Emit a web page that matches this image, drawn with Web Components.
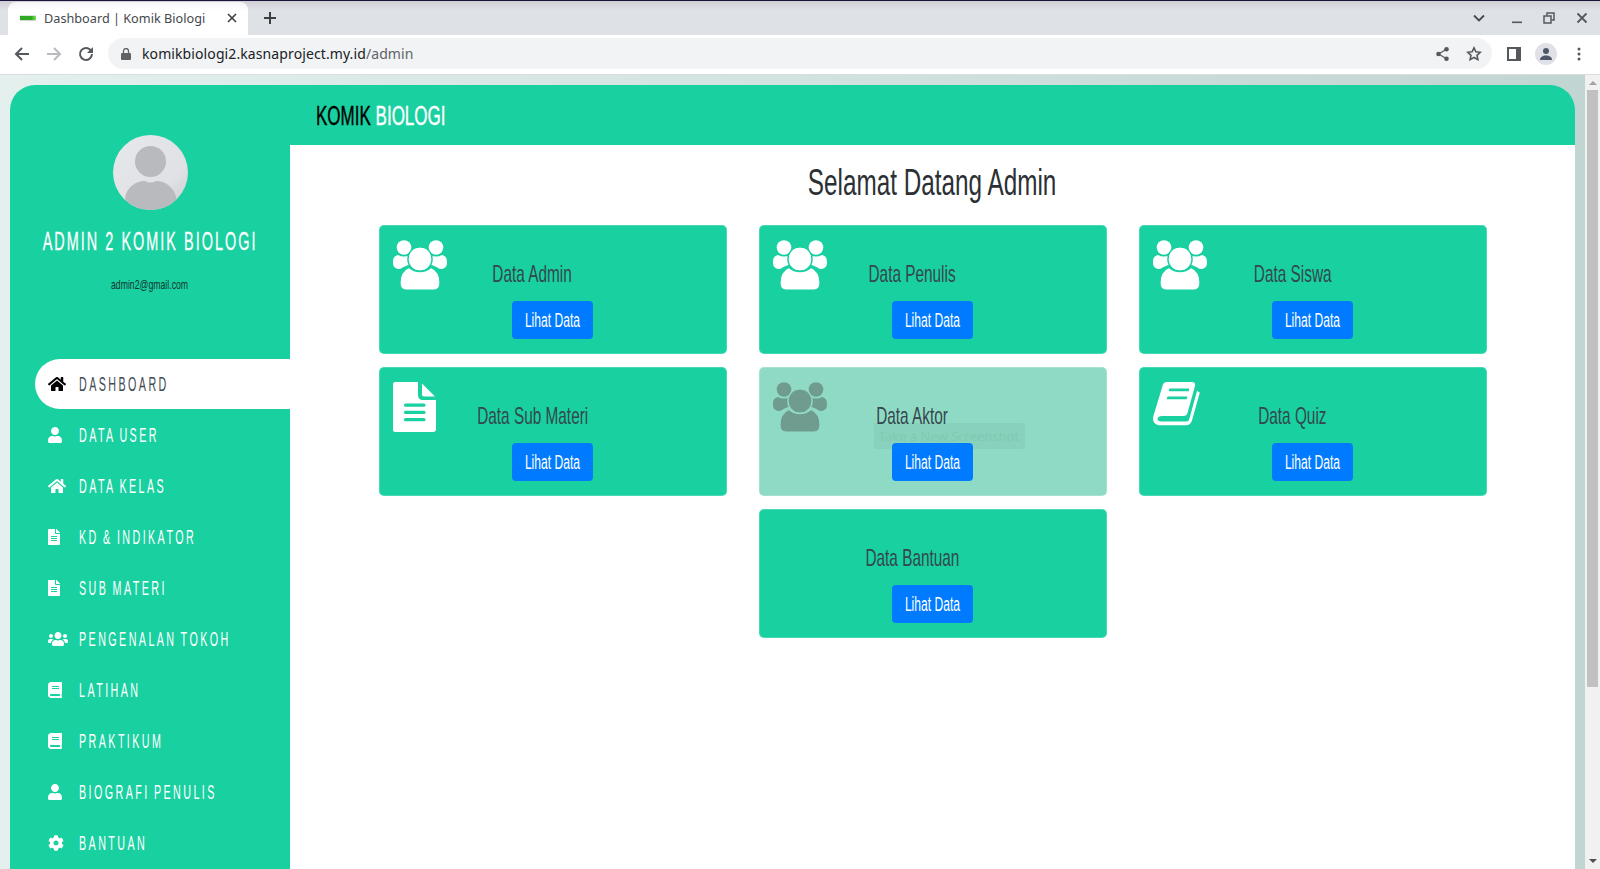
<!DOCTYPE html>
<html lang="id">
<head>
<meta charset="utf-8">
<title>Dashboard | Komik Biologi</title>
<style>
  html, body { margin: 0; height: 100%; overflow: hidden; }
  body { font-family: "Liberation Sans", sans-serif; }
</style>
</head>
<body>
<admin-window></admin-window>

<script>
// Font Awesome style icon paths
const ICONS = {
    home: ['0 0 576 512', 'M280.37 148.26L96 300.11V464a16 16 0 0 0 16 16l112.06-.29a16 16 0 0 0 15.92-16V368a16 16 0 0 1 16-16h64a16 16 0 0 1 16 16v95.64a16 16 0 0 0 16 16.05L464 480a16 16 0 0 0 16-16V300L295.67 148.26a12.19 12.19 0 0 0-15.3 0zM571.6 251.47L488 182.56V44.05a12 12 0 0 0-12-12h-56a12 12 0 0 0-12 12v72.61L318.47 43a48 48 0 0 0-61 0L4.34 251.47a12 12 0 0 0-1.6 16.9l25.5 31A12 12 0 0 0 45.15 301l235.22-193.74a12.19 12.19 0 0 1 15.3 0L530.9 301a12 12 0 0 0 16.9-1.6l25.5-31a12 12 0 0 0-1.7-16.93z'],
    user: ['0 0 448 512', 'M224 256c70.7 0 128-57.3 128-128S294.7 0 224 0 96 57.3 96 128s57.3 128 128 128zm89.6 32h-16.7c-22.2 10.2-46.9 16-72.9 16s-50.6-5.8-72.9-16h-16.7C60.2 288 0 348.2 0 422.4V464c0 26.5 21.5 48 48 48h352c26.5 0 48-21.5 48-48v-41.6c0-74.2-60.2-134.4-134.4-134.4z'],
    file: ['0 0 384 512', 'M224 136V0H24C10.7 0 0 10.7 0 24v464c0 13.3 10.7 24 24 24h336c13.3 0 24-10.7 24-24V160H248c-13.2 0-24-10.8-24-24zm64 236c0 6.6-5.4 12-12 12H108c-6.6 0-12-5.4-12-12v-8c0-6.6 5.4-12 12-12h168c6.6 0 12 5.4 12 12v8zm0-64c0 6.6-5.4 12-12 12H108c-6.6 0-12-5.4-12-12v-8c0-6.6 5.4-12 12-12h168c6.6 0 12 5.4 12 12v8zm0-72v8c0 6.6-5.4 12-12 12H108c-6.6 0-12-5.4-12-12v-8c0-6.6 5.4-12 12-12h168c6.6 0 12 5.4 12 12zm96-114.1v6.1H256V0h6.1c6.4 0 12.5 2.5 17 7l97.9 98c4.5 4.5 7 10.6 7 16.9z'],
    users: ['0 0 640 512', 'M96 224c35.3 0 64-28.7 64-64s-28.7-64-64-64-64 28.7-64 64 28.7 64 64 64zm448 0c35.3 0 64-28.7 64-64s-28.7-64-64-64-64 28.7-64 64 28.7 64 64 64zm32 32h-64c-17.6 0-33.5 7.1-45.1 18.6 40.3 22.1 68.9 62 75.1 109.4h66c17.7 0 32-14.3 32-32v-32c0-35.3-28.7-64-64-64zm-256 0c61.9 0 112-50.1 112-112S381.9 32 320 32 208 82.1 208 144s50.1 112 112 112zm76.8 32h-8.3c-20.8 10-43.9 16-68.5 16s-47.6-6-68.5-16h-8.3C179.6 288 128 339.6 128 403.2V432c0 26.5 21.5 48 48 48h288c26.5 0 48-21.5 48-48v-28.8c0-63.6-51.6-115.2-115.2-115.2zm-223.7-13.4C161.5 263.1 145.6 256 128 256H64c-35.3 0-64 28.7-64 64v32c0 17.7 14.3 32 32 32h65.9c6.3-47.4 34.9-87.3 75.2-109.4z'],
    book: ['0 0 448 512', 'M448 360V24c0-13.3-10.7-24-24-24H96C43 0 0 43 0 96v320c0 53 43 96 96 96h328c13.3 0 24-10.7 24-24v-16c0-7.5-3.5-14.3-8.9-18.7-4.2-15.4-4.2-59.3 0-74.7 5.4-4.3 8.9-11.1 8.9-18.6zM128 134c0-3.3 2.7-6 6-6h212c3.3 0 6 2.7 6 6v20c0 3.3-2.7 6-6 6H134c-3.3 0-6-2.7-6-6v-20zm0 64c0-3.3 2.7-6 6-6h212c3.3 0 6 2.7 6 6v20c0 3.3-2.7 6-6 6H134c-3.3 0-6-2.7-6-6v-20zm253.4 250H96c-17.7 0-32-14.3-32-32 0-17.6 14.4-32 32-32h285.4c-1.9 17.1-1.9 46.9 0 64z'],
    cog: ['0 0 512 512', 'M487.4 315.7l-42.6-24.6c4.3-23.2 4.3-47 0-70.2l42.6-24.6c4.9-2.8 7.1-8.6 5.5-14-11.1-35.6-30-67.8-54.7-94.6-3.8-4.1-10-5.1-14.8-2.3L380.8 110c-17.9-15.4-38.5-27.3-60.8-35.1V25.8c0-5.6-3.9-10.5-9.4-11.7-36.7-8.2-74.3-7.8-109.2 0-5.5 1.2-9.4 6.1-9.4 11.7V75c-22.2 7.9-42.8 19.8-60.8 35.1L88.7 85.5c-4.9-2.8-11-1.9-14.8 2.3-24.7 26.7-43.6 58.9-54.7 94.6-1.7 5.4.6 11.2 5.5 14L67.3 221c-4.3 23.2-4.3 47 0 70.2l-42.6 24.6c-4.9 2.8-7.1 8.6-5.5 14 11.1 35.6 30 67.8 54.7 94.6 3.8 4.1 10 5.1 14.8 2.3l42.6-24.6c17.9 15.4 38.5 27.3 60.8 35.1v49.2c0 5.6 3.9 10.5 9.4 11.7 36.7 8.2 74.3 7.8 109.2 0 5.5-1.2 9.4-6.1 9.4-11.7v-49.2c22.2-7.9 42.8-19.8 60.8-35.1l42.6 24.6c4.9 2.8 11 1.9 14.8-2.3 24.7-26.7 43.6-58.9 54.7-94.6 1.5-5.5-.7-11.3-5.6-14.1zM256 336c-44.1 0-80-35.9-80-80s35.9-80 80-80 80 35.9 80 80-35.9 80-80 80z']
};

// Big card icons, --ring is the colour that cuts through the white shape
const CARD_ICONS = {
    people: `<svg width="54" height="50" viewBox="0 0 54 50" fill="currentColor">
        <circle cx="11" cy="7.5" r="7.3"/><circle cx="43" cy="7.5" r="7.3"/>
        <path d="M5 15 C9 17 13 17 17 15 L20 24 C13 25 9 28 7 29 C3 29 0 27 0 23 C0 18 1 16 5 15Z"/>
        <path d="M49 15 C45 17 41 17 37 15 L34 24 C41 25 45 28 47 29 C51 29 54 27 54 23 C54 18 53 16 49 15Z"/>
        <circle cx="27" cy="19" r="12" stroke="var(--ring)" stroke-width="1.6"/>
        <path d="M16 27.500 C22 33 32 33 38 27.500 C44 30 47 36 47 43 C47 47.5 44.5 50 41 50 H13 C9.5 50 7 47.5 7 43 C7 36 10 30 16 27.500Z" stroke="var(--ring)" stroke-width="1.200"/>
        <circle cx="27" cy="19" r="11.200"/>
    </svg>`,
    doc: `<svg width="43" height="50" viewBox="0 0 43 50" fill="currentColor">
        <path d="M2 0 H25 V13 C25 16 27 18 30 18 H43 V47 C43 49 42 50 40 50 H2 C1 50 0 49 0 48 V2 C0 1 1 0 2 0Z"/>
        <path d="M29 1.500 L42 14.500 H31 C30 14.500 29 13.500 29 12.500Z"/>
        <g fill="var(--ring)"><rect x="11" y="21.500" width="21.500" height="3.200" rx="1.500"/><rect x="11" y="28.800" width="21.500" height="3.200" rx="1.500"/><rect x="11" y="36" width="21.500" height="3.200" rx="1.500"/></g>
    </svg>`,
    quiz: `<svg width="47" height="44" viewBox="0 0 47 44" fill="currentColor">
        <path d="M14 0 H39 C41.500 0 42.500 1.500 42 4 L34.500 31 C34 33 32.500 34 30.500 34 H9 C6 34 4.500 35.500 4.500 37 C4.500 38.500 6 39.500 8 39.500 H33 C35 39.500 35.800 38.700 36.300 37 L44 9 L46.800 10.500 L39 38.500 C38 41.500 36 43.300 33 43.300 H7.500 C3 43.300 0 40.500 0 36.500 C0 35 .5 33.500 1 32 L9.500 4 C10 1.500 11.500 0 14 0Z"/>
        <g fill="var(--ring)"><rect x="15" y="6.500" width="20" height="2.800" rx=".5" transform="skewX(-14) translate(3 0)"/><rect x="13" y="14.500" width="20" height="2.800" rx=".5" transform="skewX(-14) translate(5 0)"/></g>
    </svg>`
};

class NarrowText extends HTMLElement {
    constructor() {
        super();
        const shadow = this.attachShadow({ mode: 'open' });
        shadow.innerHTML = `
            <style>
                :host {
                    display: inline-block;
                    flex: none;
                    white-space: nowrap;
                    transform: scaleX(var(--squeeze, .64));
                    transform-origin: var(--squeeze-from, center);
                    font-family: "Liberation Sans", sans-serif;
                }
            </style>
            <slot></slot>
        `;
    }
}
customElements.define('narrow-text', NarrowText);

class FaIcon extends HTMLElement {
    constructor() {
        super();
        const shadow = this.attachShadow({ mode: 'open' });
        const [box, d] = ICONS[this.getAttribute('name')];
        const width = box.split(' ')[2] / 512 * 16;
        shadow.innerHTML = `
            <style>:host { display: inline-flex; } svg { display: block; }</style>
            <svg width="${width}" height="16" viewBox="${box}" fill="currentColor"><path d="${d}"/></svg>
        `;
    }
}
customElements.define('fa-icon', FaIcon);

// Tab strip of the browser
class BrowserTabs extends HTMLElement {
    constructor() {
        super();
        const shadow = this.attachShadow({ mode: 'open' });
        shadow.innerHTML = `
            <style>
                :host {
                    display: flex;
                    height: 35px;
                    box-sizing: border-box;
                    padding: 1px 0 0 8px;
                    align-items: stretch;
                    color: #45484d;
                    font: 12.7px "Noto Sans", "Open Sans", sans-serif;
                    background: linear-gradient(#cfd0d6 0, #dee1e6 9px);
                    border-top: 1px solid #1b1338;
                }
                .tab {
                    width: 240px;
                    box-sizing: border-box;
                    display: flex;
                    align-items: center;
                    padding: 0 11px 2px 12px;
                    background: linear-gradient(#f4f4f6, #fff 8px);
                    border-radius: 8px 8px 0 0;
                }
                .fav { width: 16px; height: 4px; margin-right: 8px; background: linear-gradient(90deg, #2fa822 70%, #7be05c); border-top: 1px solid #d3eed8; border-bottom: 1px solid #d0d4d0; }
                .name { flex: 1; }
                .x { display: block; }
                .plus { display: block; margin: 9px 0 0 15px; }
                .right { margin-left: auto; display: flex; align-items: center; padding: 0 12px 2px 0; gap: 19px; }
            </style>
            <div class="tab">
                <span class="fav"></span>
                <span class="name">Dashboard | Komik Biologi</span>
                <svg class="x" width="10" height="10" viewBox="0 0 10 10" stroke="#3c4043" stroke-width="1.6" fill="none"><path d="M1 1l8 8M9 1l-8 8"/></svg>
            </div>
            <svg class="plus" width="14" height="14" viewBox="0 0 14 14" stroke="#3c4043" stroke-width="2" fill="none"><path d="M7 1v12M1 7h12"/></svg>
            <div class="right">
                <svg width="12" height="8" viewBox="0 0 12 8" stroke="#45484d" stroke-width="1.800" fill="none"><path d="M1 1.500l5 5 5-5"/></svg>
                <svg width="12" height="12" viewBox="0 0 12 12" fill="#55585d" style="margin-left:7px"><rect x="1" y="9.500" width="10" height="1.600"/></svg>
                <svg style="margin-left:1px" width="12" height="12" viewBox="0 0 12 12" stroke="#55585d" stroke-width="1.500" fill="none"><rect x="1" y="4" width="7" height="7"/><path d="M4 3.500V1h7v7H8.500"/></svg>
                <svg style="margin-left:2px" width="12" height="12" viewBox="0 0 12 12" stroke="#55585d" stroke-width="1.800" fill="none"><path d="M1.500 1.500l9 9M10.500 1.500l-9 9"/></svg>
            </div>
        `;
    }
}
customElements.define('browser-tabs', BrowserTabs);

// Address bar of the browser
class BrowserToolbar extends HTMLElement {
    constructor() {
        super();
        const shadow = this.attachShadow({ mode: 'open' });
        shadow.innerHTML = `
            <style>
                :host {
                    display: flex;
                    align-items: center;
                    height: 40px;
                    box-sizing: border-box;
                    background: #fff;
                    border-bottom: 1px solid #dadce0;
                    padding: 0 19px 2px 14px;
                    font: 14px "Noto Sans", "Open Sans", sans-serif;
                }
                .nav { display: flex; gap: 16px; margin-right: 14px; }
                svg { display: block; }
                .omni {
                    flex: 1;
                    height: 31px;
                    display: flex;
                    align-items: center;
                    background: #f1f3f4;
                    border-radius: 16px;
                    padding: 0 10px 0 13px;
                    color: #202124;
                }
                .lock { margin-right: 11px; }
                .host { flex: 1; letter-spacing: .1px; }
                .path { color: #5f6368; }
                .omni-end { display: flex; gap: 17px; align-items: center; }
                .tools { display: flex; gap: 14px; align-items: center; margin-left: 15px; }
                .who { width: 22px; height: 22px; border-radius: 50%; background: #dfe1e6; display: flex; align-items: center; justify-content: center; }
            </style>
            <div class="nav">
                <svg width="16" height="16" viewBox="0 0 16 16" stroke="#55585d" stroke-width="2" fill="none"><path d="M15 8H2M8 2L2 8l6 6"/></svg>
                <svg width="16" height="16" viewBox="0 0 16 16" stroke="#b9bbbe" stroke-width="2" fill="none"><path d="M1 8h13M8 2l6 6-6 6"/></svg>
                <svg width="16" height="16" viewBox="0 0 16 16" fill="none"><path d="M13.200 5A6 6 0 1 0 14 8" stroke="#55585d" stroke-width="2"/><path d="M15 1v6H9z" fill="#55585d"/></svg>
            </div>
            <div class="omni">
                <svg class="lock" width="10" height="12" viewBox="0 0 10 12" fill="#5f6368"><path d="M1 5h8a1 1 0 0 1 1 1v5a1 1 0 0 1-1 1H1a1 1 0 0 1-1-1V6a1 1 0 0 1 1-1z"/><path d="M2.500 5V3a2.500 2.500 0 0 1 5 0v2" fill="none" stroke="#5f6368" stroke-width="1.300"/></svg>
                <span class="host">komikbiologi2.kasnaproject.my.id<span class="path">/admin</span></span>
                <div class="omni-end">
                    <svg width="13" height="14" viewBox="0 0 13 14" fill="#55585d"><circle cx="2.500" cy="7" r="2.300"/><circle cx="10.500" cy="2.300" r="2.300"/><circle cx="10.500" cy="11.700" r="2.300"/><path d="M2.500 7l8-4.700M2.500 7l8 4.700" stroke="#55585d" stroke-width="1.200"/></svg>
                    <svg width="16" height="15" viewBox="0 0 16 15" fill="none" stroke="#55585d" stroke-width="1.600"><path d="M8 1.800l1.900 4 4.300.5-3.200 3 .9 4.300L8 11.500l-3.900 2.100.9-4.300-3.200-3 4.300-.5z"/></svg>
                </div>
            </div>
            <div class="tools">
                <svg width="14" height="14" viewBox="0 0 14 14"><rect width="14" height="14" fill="#55585d"/><rect x="2" y="2" width="7" height="10" fill="#fff"/></svg>
                <div class="who"><svg width="12" height="12" viewBox="0 0 12 12" fill="#4f586b"><circle cx="6" cy="3" r="3"/><path d="M0 12c0-3 2.500-4.600 6-4.600S12 9 12 12z"/></svg></div>
                <svg style="margin-left:6px" width="4" height="14" viewBox="0 0 4 14" fill="#55585d"><circle cx="2" cy="2" r="1.500"/><circle cx="2" cy="7" r="1.500"/><circle cx="2" cy="12" r="1.500"/></svg>
            </div>
        `;
    }
}
customElements.define('browser-toolbar', BrowserToolbar);

class ScrollRail extends HTMLElement {
    constructor() {
        super();
        const shadow = this.attachShadow({ mode: 'open' });
        shadow.innerHTML = `
            <style>
                :host { display: flex; flex-direction: column; flex: none; width: 15px; background: #f1f1f1; align-items: center; }
                .up, .down { flex: none; width: 0; height: 0; border-left: 4px solid transparent; border-right: 4px solid transparent; }
                .up { border-bottom: 4px solid #a3a3a3; margin: 6px 0 5px; }
                .thumb { width: 11px; height: 597px; background: #c1c1c1; }
                .down { border-top: 4px solid #505050; margin-top: auto; margin-bottom: 6px; }
            </style>
            <div class="up"></div><div class="thumb"></div><div class="down"></div>
        `;
    }
}
customElements.define('scroll-rail', ScrollRail);

// One row in the sidebar menu
class NavItem extends HTMLElement {
    constructor() {
        super();
        const shadow = this.attachShadow({ mode: 'open' });
        shadow.innerHTML = `
            <style>
                :host {
                    display: flex;
                    align-items: center;
                    height: 50px;
                    margin: 0 0 1px 25px;
                    padding-left: 13px;
                    color: #fff;
                    border-radius: 25px 0 0 25px;
                    --squeeze: .55;
                    --squeeze-from: left;
                }
                :host([active]) { background: #fff; color: #3f4a52; }
                :host([active]) .icon { color: #000; }
                .icon { flex: none; width: 30.5px; display: flex; }
                narrow-text { font-size: 19.5px; letter-spacing: 4.4px; word-spacing: -2px; }
            </style>
            <span class="icon"><fa-icon name="${this.getAttribute('icon')}"></fa-icon></span>
            <narrow-text><slot></slot></narrow-text>
        `;
    }
}
customElements.define('nav-item', NavItem);

class SideBar extends HTMLElement {
    constructor() {
        super();
        const shadow = this.attachShadow({ mode: 'open' });
        shadow.innerHTML = `
            <style>
                :host {
                    display: flex;
                    flex-direction: column;
                    flex: none;
                    width: 280px;
                    box-sizing: border-box;
                    padding-top: 50px;
                }
                .avatar { display: block; margin: 0 auto; }
                .name, .mail { display: flex; justify-content: center; }
                .name { margin-top: 16px; height: 30px; line-height: 30px; color: #fff; font-size: 25px; letter-spacing: 3.5px; -webkit-text-stroke: .3px #fff; --squeeze: .577; }
                .mail { margin-top: 21px; height: 16px; line-height: 16px; color: #12362d; font-size: 13px; --squeeze: .67; }
                nav { margin-top: 66px; display: block; }
            </style>
            <svg class="avatar" width="75" height="75" viewBox="0 0 75 75">
                <defs>
                    <linearGradient id="bg" x1="0" y1="0" x2="1" y2="1"><stop offset="0" stop-color="#e6e8eb"/><stop offset=".7" stop-color="#dfe1e4"/><stop offset="1" stop-color="#c9cbcf"/></linearGradient>
                    <clipPath id="round"><circle cx="37.5" cy="37.5" r="37.500"/></clipPath>
                </defs>
                <circle cx="37.5" cy="37.5" r="37.500" fill="url(#bg)"/>
                <g clip-path="url(#round)" fill="#b8babd">
                    <circle cx="37.500" cy="26.500" r="15.500"/>
                    <path d="M12 64 C13 53 22 46 32 46 C36 48 39 48 43 46 C53 46 62 53 63.500 64 L50 80 H25Z"/>
                </g>
            </svg>
            <div class="name"><narrow-text>ADMIN 2 KOMIK BIOLOGI</narrow-text></div>
            <div class="mail"><narrow-text>admin2@gmail.com</narrow-text></div>
            <nav><slot></slot></nav>
        `;
    }
}
customElements.define('side-bar', SideBar);

// Card with a title and the "Lihat Data" button
class DataCard extends HTMLElement {
    constructor() {
        super();
        const shadow = this.attachShadow({ mode: 'open' });
        const icon = CARD_ICONS[this.getAttribute('icon')] || '';
        shadow.innerHTML = `
            <style>
                :host {
                    display: block;
                    position: relative;
                    box-sizing: border-box;
                    height: 129px;
                    padding: 14px;
                    background: var(--card-bg, #19d0a1);
                    --ring: var(--card-bg, #19d0a1);
                    border: 1px solid rgba(255, 255, 255, .2);
                    border-radius: 5px;
                    color: var(--icon-color, #fff);
                }
                :host([faded]) { --card-bg: #8fdac4; --icon-color: #6f9c8e; }
                .top { display: grid; height: 61px; }
                .icon, .title { grid-area: 1 / 1; }
                .icon { justify-self: start; align-self: start; margin-left: -1px; }
                .icon svg { display: block; }
                .title { justify-self: center; align-self: end; position: relative; left: -20px; margin-bottom: 12px; line-height: 30px; font-size: 24px; color: #34484c; --squeeze: .64; }
                .go { display: flex; justify-content: center; position: relative; }
                .btn { width: 81px; height: 38px; display: flex; align-items: center; justify-content: center; background: #007bff; border-radius: 4px; color: #fff; font-size: 19.5px; --squeeze: .62; }
                .hint { display: none; position: absolute; left: 114px; top: 55px; width: 151px; height: 26px; background: rgba(70, 110, 100, .08); border-radius: 2px; color: #80c9b2; font: 13px/26px "Noto Sans", "Open Sans", sans-serif; text-align: center; white-space: nowrap; }
                :host([faded]) .hint { display: block; }
            </style>
            <div class="hint">Take a New Screenshot</div>
            <div class="top">
                <div class="icon">${icon}</div>
                <narrow-text class="title"><slot></slot></narrow-text>
            </div>
            <div class="go"><div class="btn"><narrow-text>Lihat Data</narrow-text></div></div>
        `;
    }
}
customElements.define('data-card', DataCard);

// Main area: heading and the grid of cards
class MainPanel extends HTMLElement {
    constructor() {
        super();
        const shadow = this.attachShadow({ mode: 'open' });
        shadow.innerHTML = `
            <style>
                :host { display: flex; flex-direction: column; flex: 1; min-width: 0; }
                .head { flex: none; height: 60px; display: flex; align-items: center; padding: 2px 0 0 26px; box-sizing: border-box; font-size: 27px; --squeeze: .63; --squeeze-from: left; }
                .head b { font-weight: normal; color: #000; -webkit-text-stroke: .4px #000; }
                .head i { font-style: normal; color: #fff; -webkit-text-stroke: .4px #fff; }
                .body { flex: 1; background: #fff; }
                h1 { margin: 0; height: 80px; box-sizing: border-box; padding-top: 15px; line-height: 46px; text-align: center; font-weight: normal; font-size: 36px; color: #2b3035; --squeeze: .675; }
                .grid { display: grid; grid-template-columns: repeat(3, 348px); gap: 13px 32px; justify-content: center; }
            </style>
            <div class="head"><narrow-text><b>KOMIK</b> <i>BIOLOGI</i></narrow-text></div>
            <div class="body">
                <h1><narrow-text>Selamat Datang Admin</narrow-text></h1>
                <div class="grid"><slot></slot></div>
            </div>
        `;
    }
}
customElements.define('main-panel', MainPanel);

// Whole screenshot: browser frame, then the page
class AdminWindow extends HTMLElement {
    constructor() {
        super();
        const shadow = this.attachShadow({ mode: 'open' });
        shadow.innerHTML = `
            <style>
                :host { display: flex; flex-direction: column; height: 869px; overflow: hidden; }
                .view { flex: 1; display: flex; min-height: 0; }
                .page { flex: 1; min-width: 0; box-sizing: border-box; padding: 10px 10px 0; background: linear-gradient(90deg, #e3f0ee, #c1d5d2); }
                .app { display: flex; height: 100%; background: #19d0a1; border-radius: 25px 25px 0 0; overflow: hidden; }
            </style>
            <browser-tabs></browser-tabs>
            <browser-toolbar></browser-toolbar>
            <div class="view">
                <div class="page">
                    <div class="app">
                        <side-bar>
                            <nav-item icon="home" active>DASHBOARD</nav-item>
                            <nav-item icon="user">DATA USER</nav-item>
                            <nav-item icon="home">DATA KELAS</nav-item>
                            <nav-item icon="file">KD &amp; INDIKATOR</nav-item>
                            <nav-item icon="file">SUB MATERI</nav-item>
                            <nav-item icon="users">PENGENALAN TOKOH</nav-item>
                            <nav-item icon="book">LATIHAN</nav-item>
                            <nav-item icon="book">PRAKTIKUM</nav-item>
                            <nav-item icon="user">BIOGRAFI PENULIS</nav-item>
                            <nav-item icon="cog">BANTUAN</nav-item>
                        </side-bar>
                        <main-panel>
                            <data-card icon="people">Data Admin</data-card>
                            <data-card icon="people">Data Penulis</data-card>
                            <data-card icon="people">Data Siswa</data-card>
                            <data-card icon="doc">Data Sub Materi</data-card>
                            <data-card icon="people" faded>Data Aktor</data-card>
                            <data-card icon="quiz">Data Quiz</data-card>
                            <span></span>
                            <data-card>Data Bantuan</data-card>
                        </main-panel>
                    </div>
                </div>
                <scroll-rail></scroll-rail>
            </div>
        `;
    }
}
customElements.define('admin-window', AdminWindow);
</script>
</body>
</html>
